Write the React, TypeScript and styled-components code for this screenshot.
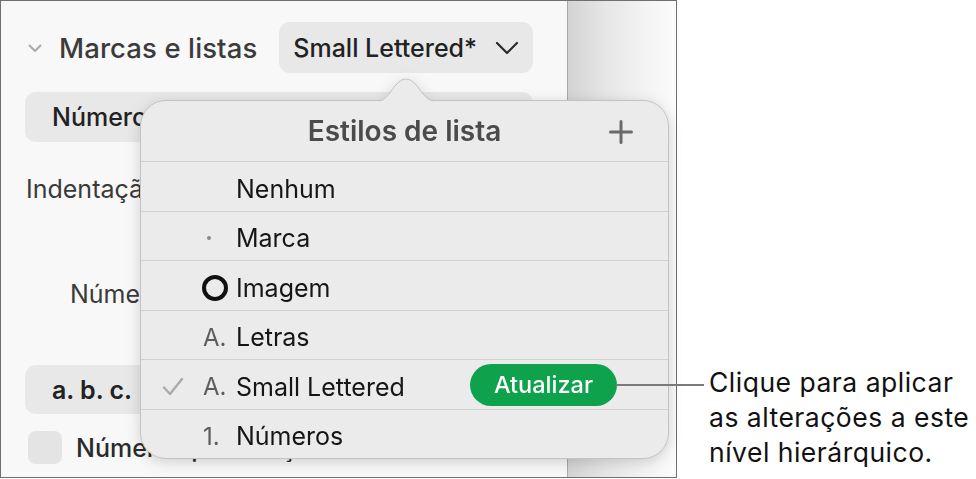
import React from "react";
import styled, { createGlobalStyle } from "styled-components";

const Global = createGlobalStyle`
  html, body {
    margin: 0;
    padding: 0;
    background: #ffffff;
  }
  body {
    font-family: Inter, "Noto Sans", "DejaVu Sans", sans-serif;
    -webkit-font-smoothing: antialiased;
  }
`;

const Page = styled.div`
  position: relative;
  display: flex;
  width: 976px;
  height: 479px;
  overflow: hidden;
`;

const Window = styled.div`
  position: relative;
  display: flex;
  width: 677px;
  height: 478px;
  box-sizing: border-box;
  border: 1px solid #6f6f6f;
  flex: none;
`;

const Sidebar = styled.div`
  width: 566px;
  height: 100%;
  box-sizing: border-box;
  background: #f8f8f8;
  padding: 21px 0 0 24px;
  display: flex;
  flex-direction: column;
  align-items: flex-start;
  color: #363636;
`;

const Canvas = styled.div`
  flex: 1;
  border-left: 1px solid #a8a8a8;
  background: linear-gradient(to right, #d3d3d3 0%, #e6e6e6 35%, #f3f3f3 70%, #fbfbfb 100%);
`;

const SectionHeader = styled.div`
  display: flex;
  align-items: center;
  height: 51px;
`;

const Disclosure = styled.svg`
  width: 14px;
  height: 9px;
  margin: 2px 0 0 3px;
  flex: none;
`;

const SectionTitle = styled.span`
  margin-left: 17px;
  font-size: 27.5px;
  font-weight: 500;
  color: #3b3b3b;
  letter-spacing: 0.1px;
`;

const PopupButton = styled.div<{ $width: number }>`
  display: flex;
  align-items: center;
  box-sizing: border-box;
  width: ${(p) => p.$width}px;
  height: 50px;
  border-radius: 11px;
  background: #e8e8e8;
  padding-left: 27px;
  font-size: 25px;
  color: #222222;
`;

const StylePopup = styled(PopupButton)`
  margin-left: 22px;
  padding-left: 14px;
  gap: 18px;
  height: 51px;
  font-weight: 500;
`;

const FullPopup = styled(PopupButton)`
  margin-top: 19px;
  font-weight: 500;
`;

const FormatPopup = styled(PopupButton)`
  margin-top: 56px;
  height: 49px;
  font-weight: 600;
`;

const FieldLabel = styled.div<{ $indent: number; $gap: number }>`
  margin-top: ${(p) => p.$gap}px;
  padding-left: ${(p) => p.$indent}px;
  line-height: 30px;
  font-size: 25px;
  color: #3a3a3a;
`;

const CheckRow = styled.div`
  display: flex;
  align-items: center;
  margin-top: 17px;
  gap: 14px;
  padding-left: 3px;
  font-size: 25px;
  font-weight: 500;
  color: #2b2b2b;
`;

const Checkbox = styled.div`
  width: 34px;
  height: 33px;
  border-radius: 8px;
  background: #e4e4e4;
`;

/* popover menu */

const Popover = styled.div`
  position: absolute;
  left: 139px;
  top: 99px;
  width: 529px;
  height: 359px;
  filter: drop-shadow(0 3px 7px rgba(0, 0, 0, 0.16));
`;

const PopoverBody = styled.div`
  position: relative;
  height: 100%;
  box-sizing: border-box;
  border: 1px solid #c3c3c3;
  border-radius: 26px;
  background: #ebebeb;
  overflow: hidden;
  display: flex;
  flex-direction: column;
`;

const Arrow = styled.svg`
  position: absolute;
  left: 238px;
  top: -22px;
  width: 56px;
  height: 24px;
  z-index: 2;
`;

const PopoverHeader = styled.div`
  position: relative;
  flex: none;
  height: 60px;
  display: flex;
  align-items: center;
  justify-content: center;
  font-size: 28px;
  font-weight: 600;
  color: #4b4b4b;
`;

const AddButton = styled.svg`
  position: absolute;
  right: 35px;
  top: 19px;
  width: 24px;
  height: 24px;
`;

const Row = styled.div`
  flex: 1;
  display: grid;
  grid-template-columns: 41px 33px 1fr auto;
  align-items: center;
  padding: 5px 51px 0 21px;
  border-top: 1px solid #d1d1d1;
  font-size: 25px;
  color: #161616;
`;

const Marker = styled.span`
  display: flex;
  align-items: center;
  height: 100%;
  color: #5c5c5c;
  font-size: 24px;
`;

const Dot = styled.span`
  width: 4px;
  height: 4px;
  border-radius: 50%;
  background: #8a8a8a;
  margin-left: 4px;
`;

const Ring = styled.span`
  width: 18px;
  height: 18px;
  border: 4px solid #111111;
  border-radius: 50%;
  margin-left: -1px;
`;

const UpdateButton = styled.div`
  width: 147px;
  height: 42px;
  margin-top: -4px;
  border-radius: 21px;
  background: #0ea24c;
  color: #ffffff;
  font-size: 23.5px;
  font-weight: 500;
  display: flex;
  align-items: center;
  justify-content: center;
`;

/* callout */

const Callout = styled.div`
  margin-left: 32px;
  padding-top: 365px;
  font-size: 26.5px;
  letter-spacing: 0.5px;
  line-height: 35px;
  color: #111111;
  white-space: nowrap;
`;

const Leader = styled.div`
  position: absolute;
  left: 616px;
  top: 384px;
  width: 88px;
  height: 1.5px;
  background: #7a7a7a;
`;

type ListStyle = {
  name: string;
  marker: React.ReactNode;
  current?: boolean;
};

const styles: ListStyle[] = [
  { name: "Nenhum", marker: null },
  { name: "Marca", marker: <Dot /> },
  { name: "Imagem", marker: <Ring /> },
  { name: "Letras", marker: "A." },
  { name: "Small Lettered", marker: "A.", current: true },
  { name: "Números", marker: "1." },
];

const CheckMark = () => (
  <svg width="22" height="19" viewBox="0 0 22 19">
    <path
      d="M2 10.5 L8 17 L20 2"
      fill="none"
      stroke="#ababab"
      strokeWidth="2.4"
      strokeLinecap="round"
      strokeLinejoin="round"
    />
  </svg>
);

export default function App() {
  return (
    <Page>
      <Global />
      <Window>
        <Sidebar>
          <SectionHeader>
            <Disclosure viewBox="0 0 14 9">
              <path d="M1.5 1.5 L7 7 L12.5 1.5" fill="none" stroke="#a9a9a9" strokeWidth="2" strokeLinecap="round" strokeLinejoin="round" />
            </Disclosure>
            <SectionTitle>Marcas e listas</SectionTitle>
            <StylePopup $width={254}>
              Small Lettered*
              <svg width="24" height="14" viewBox="0 0 24 14">
                <path d="M2 2 L12 12 L22 2" fill="none" stroke="#2a2a2a" strokeWidth="2.2" strokeLinecap="round" strokeLinejoin="round" />
              </svg>
            </StylePopup>
          </SectionHeader>
          <FullPopup $width={508}>Números</FullPopup>
          <FieldLabel $indent={1} $gap={32}>Indentação</FieldLabel>
          <FieldLabel $indent={45} $gap={75}>Número</FieldLabel>
          <FormatPopup $width={230}>a. b. c.</FormatPopup>
          <CheckRow>
            <Checkbox />
            Números por secções
          </CheckRow>
        </Sidebar>
        <Canvas />
        <Popover>
          <Arrow viewBox="0 0 56 24">
            <path d="M0 23 C12 23 16 1 28 1 C40 1 44 23 56 23 L56 24 L0 24 Z" fill="#ebebeb" />
            <path d="M0 23 C12 23 16 1 28 1 C40 1 44 23 56 23" fill="none" stroke="#c3c3c3" strokeWidth="1" />
          </Arrow>
          <PopoverBody>
            <PopoverHeader>
              Estilos de lista
              <AddButton viewBox="0 0 24 24">
                <path d="M12 1.5 V22.5 M1.5 12 H22.5" stroke="#6a6a6a" strokeWidth="3" strokeLinecap="round" />
              </AddButton>
            </PopoverHeader>
            {styles.map((s) => (
              <Row key={s.name}>
                <span>{s.current ? <CheckMark /> : null}</span>
                <Marker>{s.marker}</Marker>
                <span>{s.name}</span>
                {s.current ? <UpdateButton>Atualizar</UpdateButton> : <span />}
              </Row>
            ))}
          </PopoverBody>
        </Popover>
      </Window>
      <Callout>
        Clique para aplicar
        <br />
        as alterações a este
        <br />
        nível hierárquico.
      </Callout>
      <Leader />
    </Page>
  );
}
